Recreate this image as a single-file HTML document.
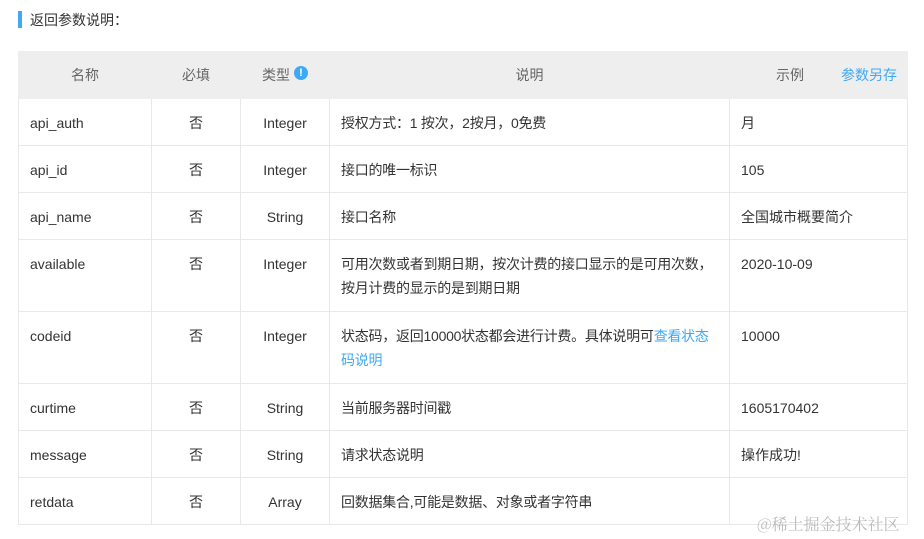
<!DOCTYPE html><html><head><meta charset="utf-8"><style>
body{margin:0;width:924px;height:539px;background:#fff;font-family:"Liberation Sans","Noto Sans CJK SC",sans-serif;font-size:14px;color:#333;position:relative;overflow:hidden}
.t{position:absolute;left:30px;top:10px;font-size:14px;color:#333}
.bar{position:absolute;left:18px;top:11px;width:4px;height:17px;background:#3fa9f5}
table{position:absolute;left:18px;top:51px;border-collapse:collapse;width:889px;table-layout:fixed}
td,th{border:1px solid #e8e8e8;padding:0 11px;vertical-align:top;line-height:24px}
th{background:#eeeeee;color:#666;font-weight:normal;height:47px;vertical-align:middle;border-color:#eee;white-space:nowrap;box-sizing:border-box}
td{padding-top:12px;height:36px;box-sizing:border-box}
.d{letter-spacing:-0.25px;padding-right:6px}
.c{text-align:center}
a{color:#3fa9f5;text-decoration:none}
.wm{position:absolute;left:757px;top:512px;color:#bbb;font-family:"Noto Serif CJK SC",serif;font-size:16px}
</style></head><body>
<div class="bar"></div><div class="t">返回参数说明：</div>
<table>
<colgroup><col style="width:133px"><col style="width:89px"><col style="width:89px"><col style="width:400px"><col style="width:178px"></colgroup>
<tr><th>名称</th><th>必填</th><th>类型 <span style="display:inline-block;width:14px;height:14px;border-radius:50%;background:#3fa9f5;color:#fff;font-size:11px;line-height:14px;font-weight:bold;vertical-align:4px">!</span></th><th>说明</th><th style="text-align:left;padding-left:46px">示例<a style="margin-left:37px">参数另存</a></th></tr>
<tr><td style="height:47px">api_auth</td><td class="c">否</td><td class="c">Integer</td><td class="d">授权方式：1 按次，2按月，0免费</td><td>月</td></tr>
<tr><td style="height:47px">api_id</td><td class="c">否</td><td class="c">Integer</td><td class="d">接口的唯一标识</td><td>105</td></tr>
<tr><td style="height:47px">api_name</td><td class="c">否</td><td class="c">String</td><td class="d">接口名称</td><td>全国城市概要简介</td></tr>
<tr><td style="height:72px">available</td><td class="c">否</td><td class="c">Integer</td><td class="d">可用次数或者到期日期，按次计费的接口显示的是可用次数，<br>按月计费的显示的是到期日期</td><td>2020-10-09</td></tr>
<tr><td style="height:72px">codeid</td><td class="c">否</td><td class="c">Integer</td><td class="d">状态码，返回10000状态都会进行计费。具体说明可<a>查看状态<br>码说明</a></td><td>10000</td></tr>
<tr><td style="height:47px">curtime</td><td class="c">否</td><td class="c">String</td><td class="d">当前服务器时间戳</td><td>1605170402</td></tr>
<tr><td style="height:47px">message</td><td class="c">否</td><td class="c">String</td><td class="d">请求状态说明</td><td>操作成功!</td></tr>
<tr><td style="height:47px">retdata</td><td class="c">否</td><td class="c">Array</td><td class="d">回数据集合,可能是数据、对象或者字符串</td><td></td></tr>
</table>
<div class="wm">@稀土掘金技术社区</div>
</body></html>
